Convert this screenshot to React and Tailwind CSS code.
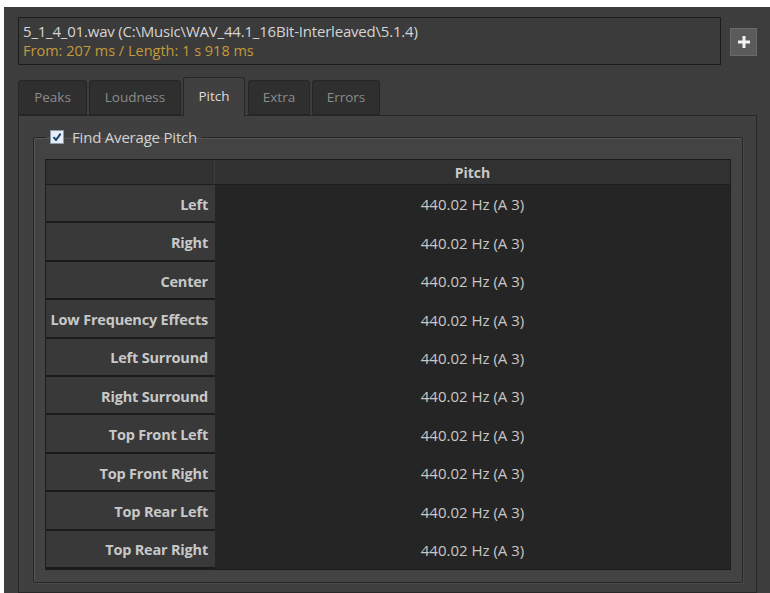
const channels = [
  'Left',
  'Right',
  'Center',
  'Low Frequency Effects',
  'Left Surround',
  'Right Surround',
  'Top Front Left',
  'Top Front Right',
  'Top Rear Left',
  'Top Rear Right',
];

const tabs = [
  { name: 'Peaks', w: 'w-[69px]' },
  { name: 'Loudness', w: 'w-[92px]' },
  { name: 'Pitch', w: 'w-[62px]', active: true },
  { name: 'Extra', w: 'w-[62px]' },
  { name: 'Errors', w: 'w-[68px]' },
];

export default function App() {
  return (
    <div className="w-[770px] h-[593px] bg-white pt-[7px] pl-[4px] overflow-hidden font-['Open_Sans',sans-serif]">
      <div className="h-[586px] bg-[#3d3d3d] pl-[14px] pt-[10px] flex flex-col">
        {/* file info */}
        <div className="flex items-start">
          <div className="w-[703px] h-[48px] border border-[#1c1c1c] bg-[#3b3b3b] pl-[4px] pt-[4px] leading-[19px]">
            <div className="text-[15px] text-[#d4d4d4] tracking-[-0.2px]">5_1_4_01.wav (C:\Music\WAV_44.1_16Bit-Interleaved\5.1.4)</div>
            <div className="text-[14.5px] text-[#c39a3a]">From: 207 ms / Length: 1 s 918 ms</div>
          </div>
          <button className="ml-[9px] mt-[11px] w-[27px] h-[28px] bg-[#5b5b5b] border border-[#6a6a6a] flex items-center justify-center">
            <svg width="14" height="14" viewBox="0 0 14 14">
              <path d="M7 1v12M1 7h12" stroke="#f2f2f2" strokeWidth="3" />
            </svg>
          </button>
        </div>

        {/* tabs */}
        <div className="mt-[12px] flex items-end h-[38px] relative z-10">
          {tabs.map((t, i) => (
            <div
              key={t.name}
              className={
                (t.active
                  ? 'h-[39px] bg-[#404040] text-[#dcdcdc] border-[#262626] border-b-0 -mb-px '
                  : 'h-[35px] bg-[#2f2f2f] text-[#8c8c8c] border-[#252525] ') +
                t.w +
                (i > 0 ? ' ml-[2px]' : '') +
                (i === 3 ? ' ml-[3px]' : '') +
                ' border rounded-t-[3px] flex items-center justify-center text-[13.5px] pb-[1px]'
              }
            >
              {t.name}
            </div>
          ))}
        </div>

        {/* tab panel */}
        <div className="w-[739px] flex-1 border border-[#262626] bg-[#404040] pl-[14px] pt-[12px]">
          <fieldset className="w-[710px] h-[455px] border border-[#262626] shadow-[inset_1px_1px_0_#555,1px_1px_0_#4a4a4a] bg-[#434343] px-[11px] pb-[11px] rounded-[2px]">
            <legend className="ml-[1px] px-[4px] flex items-center h-[18px]">
              <span className="w-[14px] h-[14px] bg-[#e8eef6] border border-[#8a9aaa] flex items-center justify-center">
                <svg width="10" height="10" viewBox="0 0 10 10">
                  <path d="M1.5 5.2 4 8 8.6 1.6" stroke="#1d3f78" strokeWidth="2" fill="none" />
                </svg>
              </span>
              <span className="ml-[8px] text-[15px] text-[#d2d2d2] tracking-[-0.2px]">Find Average Pitch</span>
            </legend>

            <div className="mt-[13px] w-[686px] h-[411px] border border-[#1c1c1c] bg-[#252525] flex flex-col">
              <div className="h-[25px] flex bg-[#313131] border-b border-[#1e1e1e]">
                <div className="w-[169px] border-r border-[#3d3d3d]" />
                <div className="flex-1 flex items-center justify-center text-[14px] font-bold text-[#c8c8c8]">Pitch</div>
              </div>
              <div className="flex-1 grid grid-rows-10">
                {channels.map((c) => (
                  <div key={c} className="flex">
                    <div className="w-[169px] bg-[#393939] border-b-2 border-[#1b1b1b] flex items-center justify-end pr-[7px] pt-[3px] text-[14.5px] font-bold text-[#c8c8c8] tracking-[-0.2px]">
                      {c}
                    </div>
                    <div className="flex-1 flex items-center justify-center pt-[1px] text-[15px] text-[#c8c8c8]">
                      440.02 Hz (A 3)
                    </div>
                  </div>
                ))}
              </div>
            </div>
          </fieldset>
        </div>
      </div>
    </div>
  );
}
